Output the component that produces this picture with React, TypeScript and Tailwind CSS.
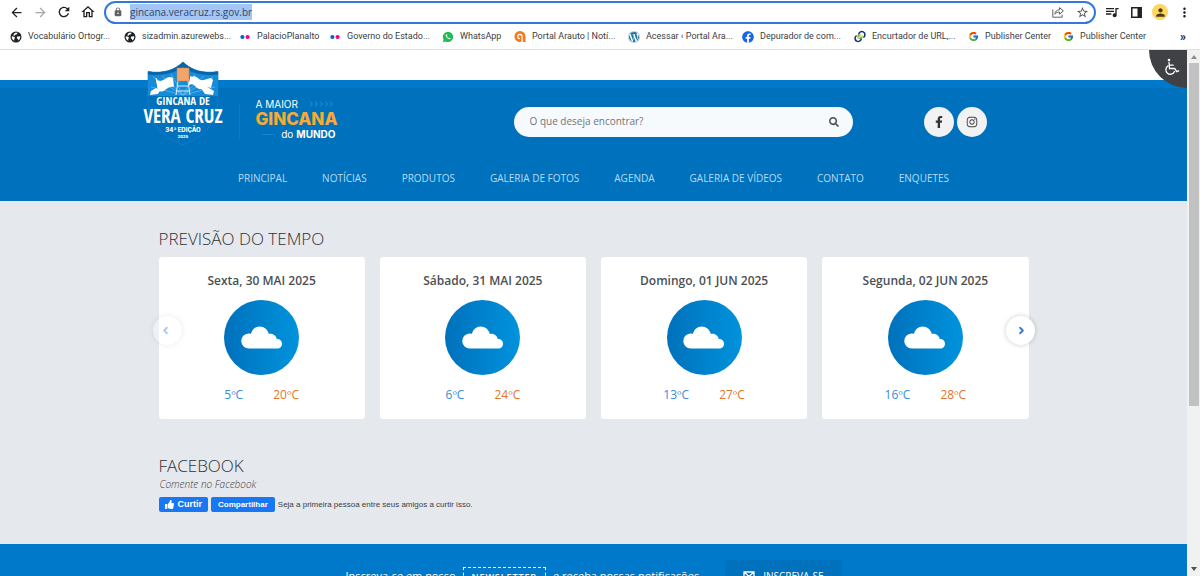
import { useState } from 'react';
import {
  MdArrowBack, MdArrowForward, MdRefresh, MdOutlineHome, MdLock, MdStarBorder,
  MdQueueMusic, MdPerson, MdMoreVert,
} from 'react-icons/md';
import { FaFacebook, FaFacebookF, FaInstagram, FaSearch, FaThumbsUp, FaWordpress } from 'react-icons/fa';
import { FcGoogle } from 'react-icons/fc';
import { ChevronLeft, ChevronRight } from 'lucide-react';

function GlobeIcon() {
  return (
    <svg viewBox="0 0 12 12" className="size-3">
      <circle cx="6" cy="6" r="5.500" fill="#202124" />
      <path d="M1.800 5.200l2.400.6.900 1.300-1 .9.300 1.700C2.600 9 1.500 7.300 1.800 5.200zM5.300 1.700l2.400.1-.8 1.500-1.700.5-.7 1-1.200-.3c.3-1.300 1-2.300 2-2.800zM7.300 5.500l2.900-.2c.3 1.900-.5 3.500-1.900 4.300l-.3-1.700-1.400-.7z" fill="#fff" />
    </svg>
  );
}

function DotsIcon() {
  return (
    <svg viewBox="0 0 12 12" className="size-3">
      <circle cx="3.400" cy="6" r="2.100" fill="#0063dc" />
      <circle cx="8.600" cy="6" r="2.100" fill="#ff0084" />
    </svg>
  );
}

function WhatsIcon() {
  return (
    <svg viewBox="0 0 12 12" className="size-3">
      <path d="M6 .8a5.100 5.100 0 0 1 0 10.300 5.300 5.300 0 0 1-2.500-.6L.8 11.200l.8-2.600A5.100 5.100 0 0 1 6 .8z" fill="#1fbd51" />
      <path d="M4.200 3.300c-.9.700-.5 2 .6 3.300s2.600 2.200 3.700 1.200c.3-.4 0-.8-.9-1.100-.4-.1-.5.500-.9.400-.7-.3-1.300-.9-1.700-1.700 0-.4.500-.5.300-.9-.2-.6-.4-1.500-1.100-1.200z" fill="#fff" />
    </svg>
  );
}

function ArautoIcon() {
  return (
    <svg viewBox="0 0 13 13" className="size-[13px]">
      <path d="M6.500.5a6 6 0 0 1 6 6v6H9.500V9.800l-.6.400V12A6 6 0 1 1 6.500.5z" fill="#f07d1a" />
      <path d="M8.700 12.600V6.500a2.300 2.300 0 1 0-2.300 2.300" fill="none" stroke="#fff" strokeWidth="1.300" />
    </svg>
  );
}

function LinkIcon() {
  return (
    <svg viewBox="0 0 13 13" className="size-[13px]">
      <circle cx="6.500" cy="6.500" r="3" fill="#8cc63f" />
      <path d="M5 4.200C5.500 1.500 8 .6 10 1.500c2.400 1.200 2.500 4.700.2 5.900" fill="none" stroke="#1d2d6b" strokeWidth="1.700" />
      <path d="M8 8.800c-.5 2.700-3 3.600-5 2.700C.6 10.300.5 6.800 2.800 5.600" fill="none" stroke="#1d2d6b" strokeWidth="1.700" />
      <path d="M4.500 8.500l4-4M6 4.500h2.500V7" fill="none" stroke="#fff" strokeWidth=".9" />
    </svg>
  );
}

const BOOKMARKS = [
  { label: 'Vocabulário Ortogr...', icon: <GlobeIcon />, width: 'w-[114px]' },
  { label: 'sizadmin.azurewebs...', icon: <GlobeIcon />, width: 'w-[115px]' },
  { label: 'PalacioPlanalto', icon: <DotsIcon />, width: 'w-[90px]' },
  { label: 'Governo do Estado...', icon: <DotsIcon />, width: 'w-[113px]' },
  { label: 'WhatsApp', icon: <WhatsIcon />, width: 'w-[72px]' },
  { label: 'Portal Arauto | Notí...', icon: <ArautoIcon />, width: 'w-[114px]' },
  { label: 'Acessar ‹ Portal Ara...', icon: <FaWordpress size={12} className="text-[#21759b]" />, width: 'w-[114px]' },
  { label: 'Depurador de com...', icon: <FaFacebook size={12} className="text-[#1866e8]" />, width: 'w-[112px]' },
  { label: 'Encurtador de URL,...', icon: <LinkIcon />, width: 'w-[113px]' },
  { label: 'Publisher Center', icon: <FcGoogle size={11} />, width: 'w-[95px]' },
  { label: 'Publisher Center', icon: <FcGoogle size={11} />, width: 'w-[95px]' },
];

const MENU = ['Principal', 'Notícias', 'Produtos', 'Galeria de Fotos', 'Agenda', 'Galeria de Vídeos', 'Contato', 'Enquetes'];

const FORECAST = [
  { day: 'Sexta, 30 MAI 2025', min: 5, max: 20 },
  { day: 'Sábado, 31 MAI 2025', min: 6, max: 24 },
  { day: 'Domingo, 01 JUN 2025', min: 13, max: 27 },
  { day: 'Segunda, 02 JUN 2025', min: 16, max: 28 },
];

const TOOL = 'flex size-6 shrink-0 items-center justify-center';

function BrowserBar() {
  const [url, setUrl] = useState('gincana.veracruz.rs.gov.br');

  return (
    <div className="shrink-0 border-b border-[#dfe1e5] bg-white text-[#3c4043]">
      <div className="flex h-6 items-center px-1">
        <button aria-label="Voltar" className={TOOL}><MdArrowBack size={15} className="text-[#202124]" /></button>
        <button aria-label="Avançar" className={TOOL}><MdArrowForward size={15} className="text-[#a5a7aa]" /></button>
        <button aria-label="Recarregar" className={TOOL}><MdRefresh size={16} className="text-[#202124]" /></button>
        <button aria-label="Página inicial" className={TOOL}><MdOutlineHome size={16} className="text-[#202124]" /></button>
        <div className="ml-1 flex h-[23px] flex-1 items-center rounded-full border-2 border-[#3478dc] pl-[7px]">
          <MdLock size={10} className="mr-[7px] shrink-0 text-[#5f6368]" />
          <input
            aria-label="Endereço"
            value={url}
            onChange={e => setUrl(e.target.value)}
            className="field-sizing-content h-4 bg-[#a3c5f5] text-[10px] leading-4 text-[#33476a] outline-none"
          />
          <button aria-label="Compartilhar página" className="ml-auto flex size-6 items-center justify-center">
            <svg viewBox="0 0 12 12" className="size-3" fill="none" stroke="#5f6368" strokeWidth="1">
              <path d="M.8 3.500v7.700h9.400V8.600" />
              <path d="M2.800 8.300c.3-2.800 1.900-4.400 4.700-4.500V1.600l3.900 3.300-3.900 3.300V6c-2 0-3.600.7-4.700 2.300z" strokeLinejoin="round" />
            </svg>
          </button>
          <button aria-label="Adicionar aos favoritos" className="flex size-6 items-center justify-center">
            <MdStarBorder size={13} className="text-[#4a4d51]" />
          </button>
        </div>
        <div className="ml-1 flex items-center">
          <button aria-label="Mídia" className={TOOL}><MdQueueMusic size={16} className="text-[#202124]" /></button>
          <button aria-label="Painel lateral" className={TOOL}>
            <svg viewBox="0 0 11 11" className="size-[11px]">
              <path d="M.8.8h9.400v9.400H.8z" fill="none" stroke="#202124" strokeWidth="1.500" />
              <path d="M6.500 1H10v9H6.500z" fill="#202124" />
            </svg>
          </button>
          <button aria-label="Perfil" className={TOOL}>
            <span className="flex size-4 items-center justify-center rounded-full bg-[#fdd663]">
              <MdPerson size={13} className="text-[#4a3c17]" />
            </span>
          </button>
          <button aria-label="Mais" className={TOOL}><MdMoreVert size={15} className="text-[#202124]" /></button>
        </div>
      </div>
      <div className="flex h-[25px] items-center pr-[14px] pl-[10px] font-[Roboto,sans-serif] text-[9px]">
        {BOOKMARKS.map((b, i) => (
          <a key={i} href="#" className={`flex shrink-0 items-center gap-1.5 whitespace-nowrap ${b.width}`}>
            <span className="flex w-3 shrink-0 justify-center">{b.icon}</span>
            {b.label}
          </a>
        ))}
        <button aria-label="Mais favoritos" className="ml-auto text-xs font-bold text-[#202124]">»</button>
      </div>
    </div>
  );
}

function ShieldLogo() {
  return (
    <svg viewBox="0 0 80 86" className="h-[86px] w-20 shrink-0" role="img" aria-label="Gincana de Vera Cruz">
      <path d="M40 1c8 8 20 12 35 9.500V36c0 24-11 38-35 48C16 74 5 60 5 36V10.500C20 13 32 9 40 1z" fill="#0071bc" stroke="#1a80c6" strokeWidth=".7" />
      <path d="M40 1c8 8 20 12 35 9.500V35H5V10.500C20 13 32 9 40 1z" fill="#168bd8" />
      <path d="M40 1c8 8 20 12 35 9.500v3C60 15 48 12 40 6c-8 6-20 9-35 7.500v-3C20 13 32 9 40 1z" fill="#0864ab" />
      <g stroke="#5bb6ee" strokeWidth=".8">
        <path d="M40 34L10 16M40 34L19 15M40 34L28 13M40 34L52 13M40 34L61 15M40 34L70 16M40 34L8 26M40 34l32-8" />
      </g>
      <path d="M35 20l-2 14M45 20l2 14M34 25h12M33 30h14" stroke="#d8ecfa" strokeWidth="1" fill="none" />
      <path d="M34 7h12v13H34z" fill="#f2a56b" stroke="#c9824f" strokeWidth=".5" />
      <path d="M13 18c3 3 6 2 9 0s5-3 8-1l1 9c-4-1-6 1-9 3s-5 2-7 0z" fill="#fff" />
      <path d="M8 30l5-3 4 2-2 4-8 1z" fill="#fff" />
      <path d="M48 16c4-2 6 0 8 2s5 1 8 0 5-1 6 1l-2 8c-3-1-5 0-8 1-4 1-6-1-8-3s-4-2-6-1z" fill="#fff" />
      <path d="M56 24l8 2 7 4-1 4-8-1z" fill="#fff" />
      <path d="M13 17l3 14M48 15l-2 9" stroke="#fff" strokeWidth="1" />
      <path d="M10 35h60v10H10z" fill="#0071bc" />
      <g fill="#fff" textAnchor="middle" fontFamily="'Open Sans Condensed', 'Noto Sans Condensed', 'Roboto Condensed', 'Liberation Sans Narrow', Roboto, sans-serif" fontWeight="800">
        <text x="40" y="44" fontSize="11">GINCANA DE</text>
        <text x="40" y="62" fontSize="19">VERA CRUZ</text>
      </g>
      <g fill="#fff" textAnchor="middle" fontFamily="Inter, sans-serif" fontWeight="800">
        <text x="40" y="71" fontSize="6">34ª EDIÇÃO</text>
        <text x="40" y="77" fontSize="4">2025</text>
      </g>
    </svg>
  );
}

function Slogan() {
  return (
    <div className="flex w-[82px] shrink-0 flex-col pb-[5px] font-[Inter,sans-serif] text-white">
      <div className="flex items-center justify-between text-[10px] leading-3">
        <span>A MAIOR</span>
        <svg viewBox="0 0 25 6" className="mr-1 h-1.5 w-[25px]" fill="none" stroke="#2f94dc" strokeWidth="1">
          <path d="M1 .5L3.500 3 1 5.500M6 .5L8.500 3 6 5.500M11 .5L13.500 3 11 5.500M16 .5L18.500 3 16 5.500M21 .5L23.500 3 21 5.500" />
        </svg>
      </div>
      <strong className="text-[17px] leading-[18px] font-extrabold text-[#f8aa34]">GINCANA</strong>
      <div className="flex items-center justify-end gap-[3px] pr-0.5 text-[10px] leading-3">
        <span className="mr-1 h-px w-3 bg-[#1c84cf]" />do <b>MUNDO</b>
      </div>
    </div>
  );
}

function Header() {
  return (
    <header className="border-t-8 border-[#0079cb] bg-[#0071bc]">
      <div className="mx-auto max-w-[900px]">
        <div className="flex h-[68px] items-center border-b border-[#0a6bb0]">
          <a href="#" className="-mt-9 -ml-px"><ShieldLogo /></a>
          <div className="mr-4 ml-4 h-9 w-px bg-[#0a7ac5]" />
          <Slogan />
          <form className="ml-44 flex h-[30px] flex-1 items-center rounded-full bg-[#f7fafd] pr-3.5 pl-4" onSubmit={e => e.preventDefault()}>
            <input
              type="search"
              aria-label="Buscar"
              placeholder="O que deseja encontrar?"
              className="min-w-0 flex-1 bg-transparent text-[10px] text-[#555] outline-none placeholder:text-[#6f757b]"
            />
            <button aria-label="Pesquisar"><FaSearch size={10} className="text-[#4b4f54]" /></button>
          </form>
          <div className="mr-[57px] ml-[71px] flex gap-[3px]">
            <a href="#" aria-label="Facebook" className="flex size-[30px] items-center justify-center rounded-full bg-[#f2f2f4]">
              <FaFacebookF size={12} className="text-[#333]" />
            </a>
            <a href="#" aria-label="Instagram" className="flex size-[30px] items-center justify-center rounded-full bg-[#f2f2f4]">
              <FaInstagram size={12} className="text-[#444]" />
            </a>
          </div>
        </div>
        <nav className="flex h-[45px] items-center justify-center gap-[35px] text-[10px] text-[#b9dcf4] uppercase">
          {MENU.map(item => <a key={item} href="#">{item}</a>)}
        </nav>
      </div>
    </header>
  );
}

function WeatherCard({ day, min, max }: { day: string; min: number; max: number }) {
  return (
    <article className="flex h-[162px] flex-col items-center rounded-[3px] bg-white pt-[14px]">
      <h3 className="text-xs leading-5 font-semibold text-[#4b4f54]">{day}</h3>
      <div className="mt-[9px] flex size-[75px] items-center justify-center rounded-full bg-linear-to-r from-[#0071bc] to-[#0093dd]">
        <svg viewBox="0 0 42 24" className="h-6 w-[42px]" fill="#fff">
          <path d="M8 22.500A7.500 7.500 0 0 1 7.500 7.500q1.500-.2 2.500.3C11 3.500 14.500.5 18.500.5c4.700 0 8.300 3.200 9.300 7.400 3.700-.6 7.200 1.400 8 5.100 3-.1 5.200 2 5.200 4.700s-2 4.800-4.800 4.800z" />
        </svg>
      </div>
      <div className="mt-[10px] flex justify-center gap-[30px] text-xs leading-5 font-medium">
        <span className="text-[#3b8bd6]">{min}ºC</span>
        <span className="text-[#e0762a]">{max}ºC</span>
      </div>
    </article>
  );
}

const ARROW = 'absolute top-[59px] flex size-[29px] items-center justify-center rounded-full bg-white text-[#3079dc] shadow-[0_0_5px_rgba(0,0,0,0.2)]';
const TITLE = 'text-[17px] leading-6 font-light text-[#2f3235]';
const FB_BUTTON = 'flex h-[15px] items-center rounded-[2px] bg-[#1877f2] font-bold text-white';

export default function App() {
  return (
    <div className="flex h-screen flex-col overflow-hidden font-['Open_Sans',sans-serif]">
      <BrowserBar />
      <div className="flex min-h-0 flex-1">
        <div className="relative min-w-0 flex-1 overflow-hidden bg-[#e5e8ed]">
          <div className="h-[30px] bg-white" />
          <Header />

          <main className="mx-auto max-w-[870px] pt-[26px]">
            <section>
              <h2 className={TITLE}>PREVISÃO DO TEMPO</h2>
              <div className="relative mt-1.5">
                <div className="grid grid-cols-4 gap-[15px]">
                  {FORECAST.map(f => <WeatherCard key={f.day} {...f} />)}
                </div>
                <button aria-label="Anterior" disabled className={`${ARROW} -left-1.5 pr-1 opacity-40`}>
                  <ChevronLeft size={11} strokeWidth={4} />
                </button>
                <button aria-label="Próximo" className={`${ARROW} -right-1.5 pl-0.5`}>
                  <ChevronRight size={11} strokeWidth={4} />
                </button>
              </div>
            </section>

            <section className="mt-[35px] h-[90px]">
              <h2 className={TITLE}>FACEBOOK</h2>
              <p className="pl-px text-[10px] leading-3 font-light text-[#3c4043] italic">Comente no Facebook</p>
              <div className="mt-[7px] flex items-center gap-[3px] font-['Liberation_Sans',sans-serif]">
                <button className={`${FB_BUTTON} gap-1 px-1.5 text-[9px]`}><FaThumbsUp size={9} />Curtir</button>
                <button className={`${FB_BUTTON} px-[7px] text-[8px]`}>Compartilhar</button>
                <span className="text-[8px] text-[#3c4043]">Seja a primeira pessoa entre seus amigos a curtir isso.</span>
              </div>
            </section>
          </main>

          <footer className="h-20 bg-[#0079cb]">
            <div className="flex items-start justify-center pt-4 text-white">
              <p className="flex items-start gap-[7px] pt-[7px] text-[11px] leading-[18px]">
                <span>Inscreva-se em nosso</span>
                <span className="border border-dashed border-white px-2 text-[9px] font-semibold tracking-widest">NEWSLETTER</span>
                <span>e receba nossas notificações</span>
              </p>
              <button className="ml-[26px] flex h-8 items-center gap-2 rounded-[3px] bg-[#0071bc] px-[18px] text-[10px]">
                <svg viewBox="0 0 12 10" className="h-2.5 w-3" fill="none" stroke="#fff" strokeWidth="1.300">
                  <path d="M1 1h10v8H1zM1 1l5 4.500L11 1" />
                </svg>
                INSCREVA-SE
              </button>
            </div>
          </footer>

          <button aria-label="Acessibilidade" className="absolute top-0 right-0 flex h-[38px] w-[38px] items-center justify-center rounded-bl-full bg-[#3f4145] pb-1 pl-2">
            <svg viewBox="0 0 16 18" className="h-[18px] w-4" fill="none" stroke="#fff" strokeWidth="1.300" strokeLinecap="round">
              <circle cx="5" cy="2" r="1.300" fill="#fff" stroke="none" />
              <path d="M5 4.500l.5 6h5.200l2 3.200 2-.9M5.200 7.200h4" />
              <path d="M4 7.900a4.500 4.500 0 1 0 6.500 5.600" />
            </svg>
          </button>
        </div>

        {/* barra de rolagem */}
        <div className="flex w-[13px] shrink-0 flex-col items-center justify-between bg-[#f1f1f1] py-[5px]">
          <div className="flex w-full flex-1 flex-col items-center">
            <svg viewBox="0 0 6 4" className="h-1 w-1.5"><path d="M0 4l3-4 3 4z" fill="#8b8b8b" /></svg>
            <div className="mt-1 h-[67%] w-2.5 bg-[#c1c1c1]" />
          </div>
          <svg viewBox="0 0 6 4" className="h-1 w-1.5"><path d="M0 0l3 4 3-4z" fill="#505050" /></svg>
        </div>
      </div>
    </div>
  );
}
